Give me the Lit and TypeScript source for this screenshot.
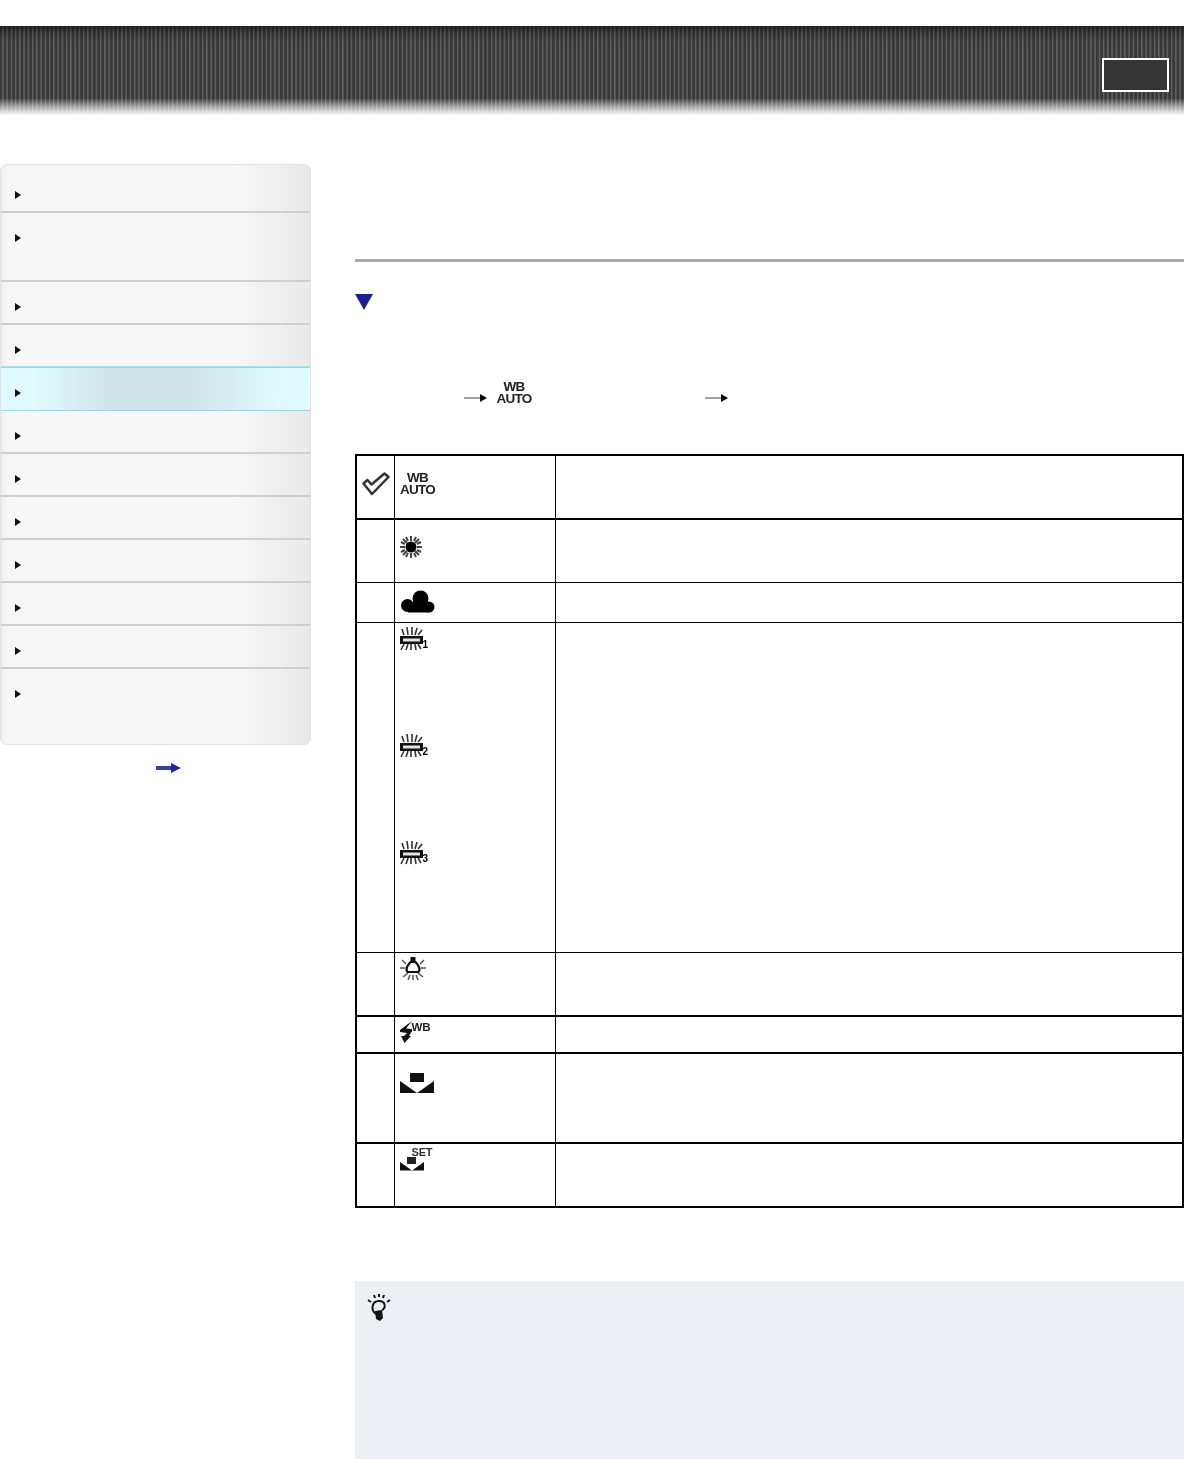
import { LitElement, html, css, svg } from "lit";
import { customElement } from "lit/decorators.js";

const rows: { h: number; active?: boolean; first?: boolean }[] = [
  { h: 48, first: true }, { h: 69 }, { h: 43 }, { h: 43 }, { h: 44, active: true }, { h: 43 },
  { h: 43 }, { h: 43 }, { h: 43 }, { h: 43 }, { h: 43 }, { h: 77 },
];

const wbAuto = html`<span class="wb">WB<br />AUTO</span>`;

const sun = svg`<svg class="ic" width="22" height="22" viewBox="0 0 22 22"><g stroke="#444" stroke-width="2">
<path d="M11 0v5M11 17v5M0 11h5M17 11h5M3 3l4 4M15 15l4 4M19 3l-4 4M7 15l-4 4M6 1l2 4M16 1l-2 4M6 21l2-4M16 21l-2-4M1 6l4 2M1 16l4-2M21 6l-4 2M21 16l-4-2"/></g><circle cx="11" cy="11" r="5.500" fill="#000"/></svg>`;

const cloud = svg`<svg class="ic" width="36" height="23" viewBox="0 0 36 23"><g fill="#000"><circle cx="7.500" cy="15.500" r="6.500"/><circle cx="20.500" cy="8.500" r="8"/><circle cx="29" cy="17" r="5.500"/><path d="M8 12h21v10.500H8z"/></g></svg>`;

const fluor = (n: string) => html`<span class="fluor"><svg width="24" height="24" viewBox="0 0 24 24"><g stroke="#333" stroke-width="1.600" fill="none">
<path d="M2 2l2 6M7 0l1 8M12 0v8M17 1l-2 7M22 3l-4 5M1 23l3-6M6 23l2-6M11 23l0-6M16 23l-1-6M21 22l-3-5"/></g>
<path d="M0 9h23v8H0z" fill="#111"/><path d="M3 11.500h17v3H3z" fill="#e4e4e4"/></svg><b>${n}</b></span>`;

const bulb = svg`<svg class="ic" width="26" height="23" viewBox="0 0 26 23"><g stroke="#555" stroke-width="1.500" fill="none"><path d="M0 11h5M21 11h5M2 3l4 4M24 3l-4 4M3 20l5-4M23 20l-5-4M8 23l2-5M18 23l-2-5M13 23v-5"/></g><path d="M10.500 5C7 9 5 12 7.500 15h11C21 12 19 9 15.500 5z" fill="#fff" stroke="#111" stroke-width="2.200" stroke-linejoin="round"/><path d="M10.500 0h5v6h-5z" fill="#111"/></svg>`;

const flash = html`<span class="flash"><svg width="13" height="22" viewBox="0 0 13 22"><path d="M12 0L0 9v2l7 1-3 3H1l3.500 7 6.500-7H9l3-5V8l-6-.5z" fill="#111"/></svg><b>WB</b></span>`;

const custom = svg`<svg class="ic" width="34" height="20" viewBox="0 0 34 20"><path d="M10 0h14v9H10z" fill="#111"/><path d="M0 8l17 12H0zM34 8L17 20h17z" fill="#111"/></svg>`;

const customSet = html`<span class="cset"><svg width="24" height="14" viewBox="0 0 24 14"><path d="M7 0h9v7H7z" fill="#222"/><path d="M0 5l12 8.500H0zM24 5L12 13.500h12z" fill="#111"/></svg><b>SET</b></span>`;

const arrow = svg`<svg class="stepa" width="24" height="10" viewBox="0 0 24 10"><path d="M0 5h17" stroke="#444" stroke-width="1"/><path d="M16 1l7 4-7 4z" fill="#000"/></svg>`;

@customElement("app-root")
export class AppRoot extends LitElement {
  static styles = css`
    :host { display: block; height: 1459px; overflow: hidden; background: #fff; font-family: "Liberation Sans", Arial, sans-serif; color: #000; }
    .head { margin-top: 26px; height: 89px; display: flex; justify-content: flex-end; align-items: flex-start;
      background:
        linear-gradient(180deg, rgba(0,0,0,.5) 0, rgba(0,0,0,.12) 8px, rgba(0,0,0,0) 16px, rgba(255,255,255,0) 72px, rgba(255,255,255,.5) 80px, rgba(255,255,255,.93) 88px),
        repeating-linear-gradient(90deg, #383838 0, #383838 1.800px, #606060 2.500px, #5a5a5a 3.200px, #383838 4.250px);
    }
    .btn { width: 63px; height: 30px; margin: 32px 15px 0 0; border: 2px solid #fff; background: #353535; }
    .main { display: flex; padding-top: 49px; align-items: flex-start; }
    .side { width: 311px; flex: none; }
    .menu { height: 581px; box-sizing: border-box; border: 1px solid #e2e2e2; border-radius: 7px; overflow: hidden; background: linear-gradient(90deg, #f0f0f0 0, #f7f7f7 8px, #f7f7f7 235px, #e9e9e9 100%); }
    .mi { box-sizing: border-box; border-bottom: 2px solid #cfcfcf; padding: 21px 0 0 14px; line-height: 0; }
    .mi.first { padding-top: 26px; }
    .mi:last-child { border-bottom: 0; }
    .mi.active { background: linear-gradient(90deg, #e0fbff 0, #e0fbff 30px, #d0e4e7 110px, #d0e4e7 190px, #e0fbff 280px); border: 1px solid #7ddfff; margin: -1px -1px 0 -1px; }
    .tri { display: inline-block; border-left: 6px solid #111; border-top: 4.500px solid transparent; border-bottom: 4.500px solid transparent; filter: blur(.3px); }
    .more { display: flex; justify-content: center; padding: 17px 0 0 27px; }
    .content { margin-left: 44px; flex: 1; min-width: 0; }
    .rule { height: 3px; background: #aaa; margin-top: 95px; }
    .down { margin-top: 32px; height: 16px; line-height: 0; }
    .down svg { filter: blur(.4px); }
    .step { display: flex; align-items: center; height: 25px; margin-top: 70px; padding-left: 109px; }
    .stepa { display: block; margin-top: 11px; }
    .wb { display: block; width: 36px; text-align: center; font-weight: 700; font-size: 13.500px; line-height: 11.500px; letter-spacing: -.75px; color: #222; filter: blur(.3px); }
    .step .wb { margin: 0 173px 0 8px; }
    table { margin-top: 49px; width: 829px; height: 753px; border-collapse: collapse; table-layout: fixed; border: 2px solid #000; }
    td { padding: 0; border: 1px solid #000; vertical-align: top; box-sizing: border-box; }
    tr.thick td { border-bottom-width: 2px; }
    .c1 { width: 38px; }
    .c2 { width: 161px; padding: 7px 0 0 5px; }
    .c1 svg { display: block; margin: 16px 0 0 5px; filter: blur(.3px); }
    .ic { display: block; filter: blur(.3px); }
    .p16 { padding-top: 16px; }
    .p7 { padding-top: 7px; }
    .p4 { padding-top: 4px; }
    .p3 { padding-top: 3px; }
    .gap { display: block; padding-top: 9px; }
    .gap2 { display: block; padding-top: 12px; }
    .fluor { display: flex; align-items: flex-start; height: 107px; }
    .fluor svg { display: block; flex: none; filter: blur(.3px); }
    .fluor b { font-size: 10px; line-height: 10px; margin: 13px 0 0 -1px; filter: blur(.2px); }
    .flash { display: flex; align-items: flex-start; }
    .flash b { font-size: 11.500px; line-height: 12px; color: #222; letter-spacing: -.2px; margin-left: -1px; filter: blur(.3px); }
    .cset { display: block; position: relative; height: 24px; }
    .cset svg { position: absolute; left: 0; top: 10px; filter: blur(.3px); }
    .cset b { position: absolute; left: 12px; top: 0; font-size: 11px; line-height: 11px; color: #333; letter-spacing: -.2px; filter: blur(.3px); }
    .tip { margin-top: 73px; height: 178px; background: #eceff4; padding: 13px 0 0 12px; box-sizing: border-box; }
  `;

  render() {
    return html`
      <div class="head"><div class="btn"></div></div>
      <div class="main">
        <nav class="side">
          <div class="menu">
            ${rows.map((r) => html`<div class="mi ${r.active ? "active" : ""} ${r.first ? "first" : ""}" style="height:${r.h}px"><span class="tri"></span></div>`)}
          </div>
          <div class="more">
            <svg width="26" height="12" viewBox="0 0 26 12"><path d="M0 4h15v4H0z" fill="#3a4296"/><path d="M15 1l10 5-10 5z" fill="#20289a"/></svg>
          </div>
        </nav>
        <main class="content">
          <div class="rule"></div>
          <div class="down">
            <svg width="18" height="16" viewBox="0 0 18 16"><path d="M0 0h18l-9 16z" fill="#1a1f92"/></svg>
          </div>
          <div class="step">${arrow}${wbAuto}${arrow}</div>
          <table>
            <tbody>
              <tr class="thick" style="height:64px">
                <td class="c1"><svg width="28" height="24" viewBox="0 0 28 24"><path d="M1.500 11.500l4-3.500 4 4.500L22.500 1.500l4 3.500L10 22z" fill="#fff" stroke="#333" stroke-width="2.500" stroke-linejoin="round"/></svg></td>
                <td class="c2 p16">${wbAuto}</td><td></td>
              </tr>
              <tr style="height:63px"><td class="c1"></td><td class="c2"><span class="gap">${sun}</span></td><td></td></tr>
              <tr style="height:40px"><td class="c1"></td><td class="c2 p7">${cloud}</td><td></td></tr>
              <tr style="height:330px"><td class="c1"></td><td class="c2 p4">${fluor("1")}${fluor("2")}${fluor("3")}</td><td></td></tr>
              <tr class="thick" style="height:64px"><td class="c1"></td><td class="c2 p4">${bulb}</td><td></td></tr>
              <tr class="thick" style="height:37px"><td class="c1"></td><td class="c2 p4">${flash}</td><td></td></tr>
              <tr class="thick" style="height:90px"><td class="c1"></td><td class="c2"><span class="gap2">${custom}</span></td><td></td></tr>
              <tr style="height:64px"><td class="c1"></td><td class="c2 p3">${customSet}</td><td></td></tr>
            </tbody>
          </table>
          <div class="tip">
            <svg width="24" height="28" viewBox="0 0 24 28"><g stroke="#111" stroke-width="2" fill="none"><path d="M1 6l3 2M7 1l1 3M12 0v3M17 1l-1 3M23 6l-3 2"/><path d="M9 20c-5-3-5-13 3-13 7 0 7 7 3 9"/></g><path d="M8 17l7-1 1 8-3 3-4-2z" fill="#111"/></svg>
          </div>
        </main>
      </div>
    `;
  }
}
